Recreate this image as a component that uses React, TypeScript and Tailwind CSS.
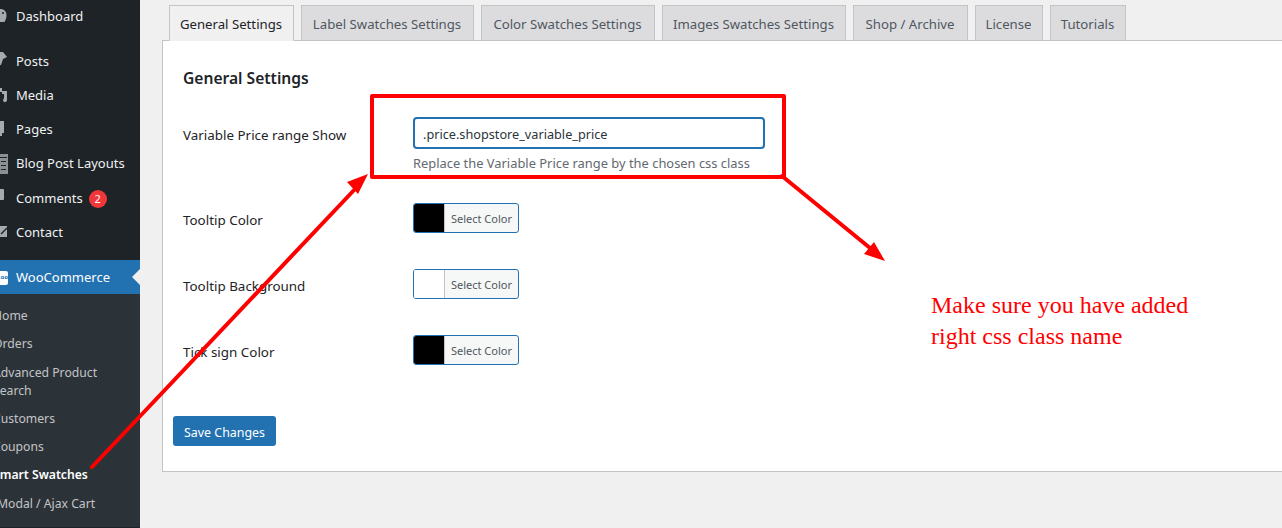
function Tab({ label, active, w }: { label: string; active?: boolean; w: string }) {
  return (
    <div className={active
      ? `${w} h-[36px] -mb-px flex items-center justify-center border border-[#c3c4c7] border-b-[#f0f0f1] bg-[#f0f0f1] pt-[3px] pr-[1px] text-[13.2px] text-[#1d2327] z-10`
      : `${w} h-[36px] -mb-px flex items-center justify-center border border-[#c3c4c7] bg-[#dcdcde] pt-[3px] pr-[1px] text-[13.2px] text-[#50575e]`}>
      {label}
    </div>
  );
}
function Top({ label, h, icon, children }: { label: string; h: string; icon: React.ReactNode; children?: React.ReactNode }) {
  return (
    <div className={`${h} flex items-center text-[13px] text-[#f0f0f1]`}>
      <span className="h-[20px] w-[16px] shrink-0">{icon}</span>
      <span>{label}</span>
      {children}
    </div>
  );
}
function Sub({ label, strong, h = "h-[28px]", ml = "-ml-[7px]" }: { label: string; strong?: boolean; h?: string; ml?: string }) {
  return (
    <div className={`${h} ${ml} flex items-center text-[12.2px] leading-[18px] ${strong ? "font-semibold text-white" : "pt-[2px] text-[#c3c4c7]"}`}>
      {label}
    </div>
  );
}
function Swatch({ color }: { color: string }) {
  return (
    <div className="flex h-[30px] w-[106px] overflow-hidden rounded-[3px] border border-[#2271b1] bg-[#f6f7f7]">
      <div className={`w-[31px] border-r border-[#c3c4c7] ${color}`} />
      <div className="flex flex-1 items-center justify-center pt-[3px] text-[11px] text-[#50575e]">Select Color</div>
    </div>
  );
}
function Row({ label, color, mb }: { label: string; color: string; mb: string }) {
  return (
    <div className={`flex items-center ${mb}`}>
      <div className="w-[230px] pt-[4px] text-[13.4px] text-[#1d2327]">{label}</div>
      <Swatch color={color} />
    </div>
  );
}
const G = "#a7aaad";
export default function App() {
  return (
    <div className="relative flex h-[528px] w-[1282px] overflow-hidden bg-[#f0f0f1] font-['Noto_Sans',sans-serif]">
      <aside className="w-[140px] shrink-0 overflow-hidden bg-[#1d2327]">
        <Top label="Dashboard" h="h-[34px] mb-[11px]" icon={
          <svg width="8" height="20" viewBox="0 0 8 20"><path d="M0 2h1a6 6 0 0 1 5.5 6.5c0 2.5-1 4.5-2 6.5H0z" fill={G} /><circle cx="3" cy="6" r="1" fill="#1d2327" /></svg>} />
        <Top label="Posts" h="h-[34px]" icon={
          <svg width="8" height="20" viewBox="0 0 8 20"><path d="M0 0h3l4 5-4 2-2 6H0z" fill={G} /></svg>} />
        <Top label="Media" h="h-[34px]" icon={
          <svg width="8" height="20" viewBox="0 0 8 20"><path d="M0 2h2v4H0zM2 5h5v9a2 2 0 1 1-3-1.6V8H2z" fill={G} /></svg>} />
        <Top label="Pages" h="h-[34px]" icon={
          <svg width="6" height="20" viewBox="0 0 6 20"><path d="M0 1h4v12H0zM0 13h2v3H0z" fill={G} /></svg>} />
        <Top label="Blog Post Layouts" h="h-[33px] mb-[2px]" icon={
          <svg width="8" height="20" viewBox="0 0 8 20"><path d="M0 0h8v20H0z" fill="#8c8f94" /><path d="M0 3.500h7M1 7.500h5M1 11.500h5M1 15.500h5" stroke="#1d2327" /></svg>} />
        <Top label="Comments" h="h-[34px]" icon={
          <svg width="5" height="20" viewBox="0 0 5 20"><path d="M0 0h3a1 1 0 0 1 1 1v9a1 1 0 0 1-1 1H0z" fill={G} /></svg>}>
          <span className="ml-[6px] flex h-[18px] w-[18px] items-center justify-center rounded-full bg-[#f0383a] text-[11px] text-white">2</span>
        </Top>
        <Top label="Contact" h="h-[34px] mb-[10px]" icon={
          <svg width="8" height="20" viewBox="0 0 8 20"><path d="M0 3h7v11H0z" fill={G} /><path d="M1 11l6-6" stroke="#1d2327" strokeWidth="1.500" /></svg>} />
        <div className="relative flex h-[34px] items-center bg-[#2271b1] pt-[1px] text-[13px] text-white">
          <span className="flex h-[20px] w-[16px] shrink-0 items-center">
            <span className="flex h-[14px] w-[8px] items-center justify-end rounded-r-[2px] bg-white text-[6px] font-bold text-[#2271b1]">oo</span>
          </span>
          WooCommerce
          <span className="absolute right-0 top-[9px] h-0 w-0 border-y-[8px] border-r-[8px] border-y-transparent border-r-[#f0f0f1]" />
        </div>
        <div className="bg-[#2c3338] pb-[10px] pt-[7px]">
          <Sub label="Home" />
          <Sub label="Orders" />
          <Sub label="Advanced Product Search" h="h-[47px] w-[113px]" />
          <Sub label="Customers" />
          <Sub label="Coupons" />
          <Sub label="Smart Swatches" strong h="h-[29px]" />
          <Sub label="Modal / Ajax Cart" ml="-ml-[3px]" />
        </div>
      </aside>
      <main className="min-w-0 flex-1 pl-[22px] pt-[5px]">
        <div className="relative flex h-[36px] w-[1200px] gap-[7px] border-b border-[#c3c4c7] pl-[7px]">
          <Tab label="General Settings" active w="w-[125px]" />
          <Tab label="Label Swatches Settings" w="w-[173px]" />
          <Tab label="Color Swatches Settings" w="w-[174px]" />
          <Tab label="Images Swatches Settings" w="w-[184px]" />
          <Tab label="Shop / Archive" w="w-[115px]" />
          <Tab label="License" w="w-[68px]" />
          <Tab label="Tutorials" w="w-[76px]" />
        </div>
        <div className="h-[431px] w-[1200px] border-b border-l border-[#c3c4c7] bg-white pl-[20px]">
          <h2 className="pt-[26px] text-[15.6px] font-semibold leading-[22px] text-[#1d2327]">General Settings</h2>
          <div className="mt-[28px] flex">
            <div className="w-[230px] pt-[8px] text-[13.4px] text-[#1d2327]">Variable Price range Show</div>
            <div>
              <div className="flex h-[32px] w-[352px] items-center rounded-[4px] border-2 border-[#2271b1] px-[8px] pt-[4px] text-[12.7px] text-[#2c3338]">.price.shopstore_variable_price</div>
              <p className="mt-[4px] text-[12.9px] leading-[20px] text-[#646970]">Replace the Variable Price range by the chosen css class</p>
            </div>
          </div>
          <div className="mt-[30px]">
            <Row label="Tooltip Color" color="bg-black" mb="mb-[36px]" />
            <Row label="Tooltip Background" color="bg-white" mb="mb-[36px]" />
            <Row label="Tick sign Color" color="bg-black" mb="mb-[51px]" />
          </div>
          <button className="-ml-[10px] h-[30px] w-[103px] rounded-[3px] bg-[#2271b1] pt-[4px] text-[12.4px] text-white">Save Changes</button>
        </div>
      </main>

      <div className="absolute left-[370px] top-[94px] h-[85px] w-[416px] rounded-[2px] border-[4px] border-[#ff0000]" />
      <svg className="absolute left-0 top-0" width="1282" height="528" viewBox="0 0 1282 528">
        <path d="M92 467L356 188" stroke="#ff0000" strokeWidth="4" strokeLinecap="round" fill="none" />
        <path d="M368 174L358 194 347 182z" fill="#ff0000" />
        <path d="M782 176L870 248" stroke="#ff0000" strokeWidth="4" strokeLinecap="round" fill="none" />
        <path d="M885 261L864 254 874 242z" fill="#ff0000" />
      </svg>
      <div className="absolute left-[931px] top-[290px] font-['Liberation_Serif',serif] text-[24px] leading-[31px] text-[#ff0000]">
        Make sure you have added<br />right css class name
      </div>
    </div>
  );
}
